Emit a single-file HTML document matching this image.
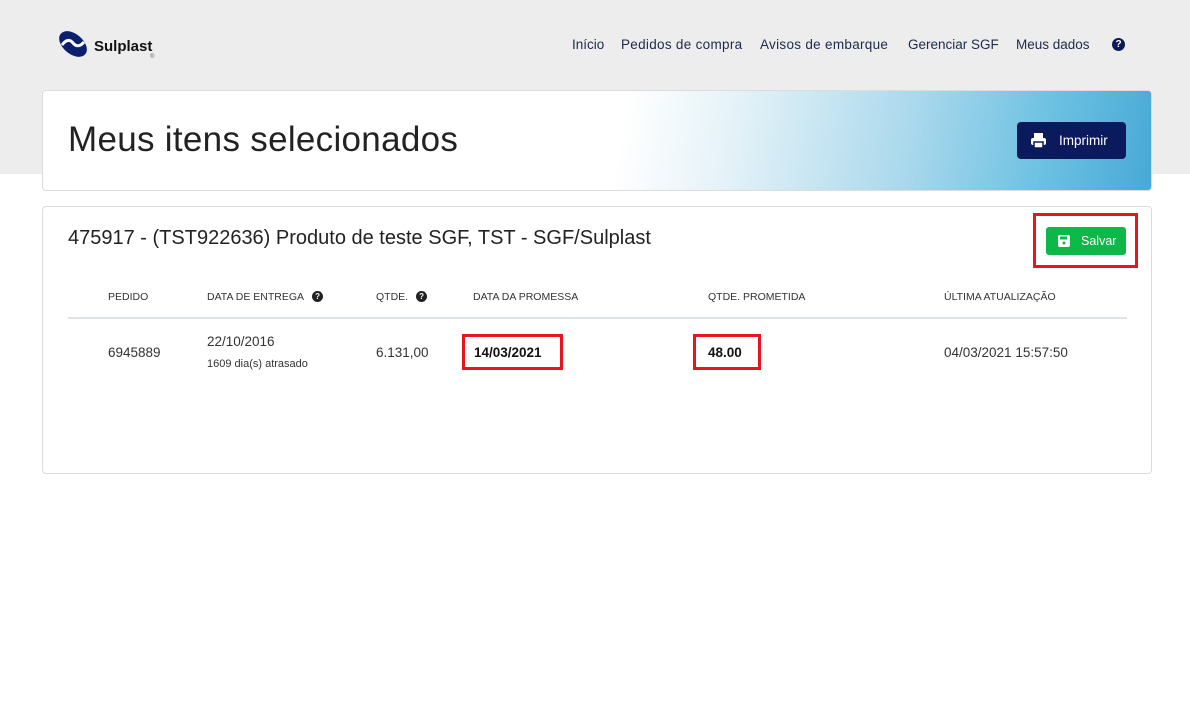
<!DOCTYPE html>
<html><head><meta charset="utf-8"><style>
*{box-sizing:border-box;margin:0;padding:0}
body{width:1190px;height:726px;background:#fff;font-family:"Liberation Sans",sans-serif;color:#222;position:relative;overflow:hidden}
.top{position:absolute;left:0;top:0;width:1190px;height:174px;background:#ededed}
.nav{position:absolute;top:37px;font-size:13.5px;color:#1d2a4d}
.card{position:absolute;left:42px;width:1110px;background:#fff;border:1px solid #dcdcdc;border-radius:4px;overflow:hidden}
.hdr{top:90px;height:101px;background:linear-gradient(100deg,#fff 0%,#fff 52%,#e4f2f8 62%,#a9d8ec 78%,#6cc1e2 90%,#48a9d6 100%)}
.abs{position:absolute}
.th{position:absolute;top:291px;font-size:10.5px;color:#333}
.td{position:absolute;font-size:13.5px;color:#333}
.q{display:inline-block;width:11px;height:11px;border-radius:50%;background:#222;color:#fff;font-size:8px;font-weight:bold;text-align:center;line-height:11px;vertical-align:1px;margin-left:8px}
.red{position:absolute;border:3px solid #e8141e}
</style></head><body>
<div class="top"></div>
<svg class="abs" style="left:56px;top:27px" width="36" height="34" viewBox="0 0 36 34"><ellipse cx="17" cy="17" rx="16" ry="10" transform="rotate(40 17 17)" fill="#0c1f6e"/><path d="M6 18 Q12 10 17 16 Q22 22 28 15" stroke="#fff" stroke-width="3" fill="none"/></svg>
<div class="abs" style="left:94px;top:38px;font-size:15px;font-weight:bold;color:#111">Sulplast</div>
<div class="abs" style="left:150px;top:54px;font-size:6px;color:#666">®</div>
<div class="nav" style="left:572px">Início</div>
<div class="nav" style="left:621px;letter-spacing:0.3px">Pedidos de compra</div>
<div class="nav" style="left:760px;letter-spacing:0.3px">Avisos de embarque</div>
<div class="nav" style="left:908px">Gerenciar SGF</div>
<div class="nav" style="left:1016px">Meus dados</div>
<div class="abs" style="left:1112px;top:38px;width:13px;height:13px;border-radius:50%;background:#0d1a55;color:#fff;font-size:10px;font-weight:bold;text-align:center;line-height:13px">?</div>
<div class="card hdr">
<div class="abs" style="left:25px;top:29px;font-size:35px;color:#222;letter-spacing:0.3px">Meus itens selecionados</div>
<div class="abs" style="left:974px;top:31px;width:109px;height:37px;background:#0b1a5c;border-radius:4px;color:#fff;font-size:13.5px;line-height:37px;padding-left:42px">Imprimir
<svg class="abs" style="left:14px;top:11px" width="15" height="15" viewBox="0 0 15 15"><rect x="3" y="0" width="9" height="5" fill="#fff"/><rect x="0" y="5" width="15" height="7" rx="2" fill="#fff"/><rect x="3" y="9" width="9" height="6" fill="#fff" stroke="#0b1a5c" stroke-width="1.5"/></svg></div>
</div>
<div class="card" style="top:206px;height:268px">
<div class="abs" style="left:25px;top:20px;font-size:20px;color:#222">475917 - (TST922636) Produto de teste SGF, TST - SGF/Sulplast</div>
<div class="abs" style="left:1003px;top:20px;width:80px;height:28px;background:#0db848;border-radius:3px;color:#fff;font-size:12.5px;line-height:28px;padding-left:35px">Salvar
<svg class="abs" style="left:12px;top:8px" width="12" height="12" viewBox="0 0 12 12"><rect width="12" height="12" rx="2" fill="#fff"/><rect x="2" y="1.5" width="7" height="3" fill="#0db848"/><circle cx="6" cy="8" r="1.5" fill="#0db848"/></svg></div>
<div class="abs" style="left:25px;top:110px;width:1059px;height:2px;background:#dfe3e8"></div>
</div>
<div class="red" style="left:1033px;top:213px;width:105px;height:55px"></div>
<div class="th" style="left:108px">PEDIDO</div>
<div class="th" style="left:207px">DATA DE ENTREGA<span class="q">?</span></div>
<div class="th" style="left:376px">QTDE.<span class="q">?</span></div>
<div class="th" style="left:473px">DATA DA PROMESSA</div>
<div class="th" style="left:708px">QTDE. PROMETIDA</div>
<div class="th" style="left:944px">ÚLTIMA ATUALIZAÇÃO</div>
<div class="td" style="left:108px;top:345px">6945889</div>
<div class="td" style="left:207px;top:334px">22/10/2016</div>
<div class="td" style="left:207px;top:358px;font-size:11px">1609 dia(s) atrasado</div>
<div class="td" style="left:376px;top:345px">6.131,00</div>
<div class="red" style="left:462px;top:334px;width:101px;height:36px"></div>
<div class="td" style="left:474px;top:345px;font-weight:bold;color:#111">14/03/2021</div>
<div class="red" style="left:693px;top:334px;width:68px;height:36px"></div>
<div class="td" style="left:708px;top:345px;font-weight:bold;color:#111">48.00</div>
<div class="td" style="left:944px;top:345px">04/03/2021 15:57:50</div>
</body></html>
